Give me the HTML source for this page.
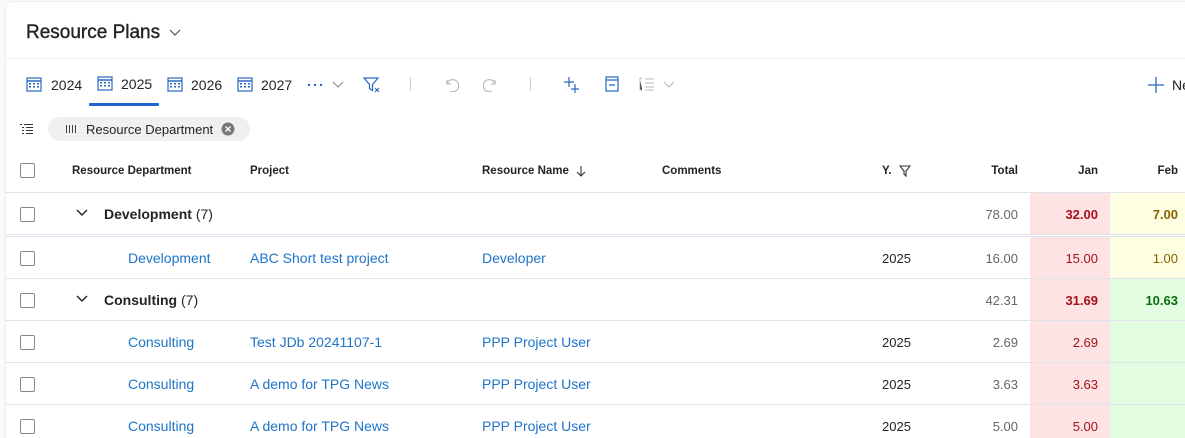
<!DOCTYPE html>
<html><head><style>
*{box-sizing:border-box;margin:0;padding:0}
html,body{width:1185px;height:438px;overflow:hidden}
body{background:#fafafa;font-family:"Liberation Sans",sans-serif;font-size:13px;color:#242424;position:relative}
.card{position:absolute;left:6px;top:2px;width:1190px;height:450px;background:#fff;border-radius:6px;box-shadow:0 0 2px rgba(0,0,0,.15)}
.a{position:absolute;white-space:nowrap}
.cb{position:absolute;left:20px;width:15px;height:15px;border:1.5px solid #8a8a8a;border-radius:2px}
.row{position:absolute;left:6px;width:1180px;height:42px;border-bottom:1px solid #e0e3ea}
.lnk{color:#1f74c8;font-size:14px}
.r{text-align:right}
.hd{font-size:11.5px;font-weight:bold}
.grey{color:#666}
.g{font-size:14px;font-weight:bold}
</style></head><body>
<div class="card"></div>
<div class="a" style="left:26px;top:22px;font-size:19px;color:#242424;-webkit-text-stroke:0.4px #242424">Resource Plans</div>
<svg class="a" style="left:168px;top:28px" width="14" height="10"><path d="M2 2l5 5 5-5" fill="none" stroke="#555" stroke-width="1.2"/></svg>
<div class="a" style="left:6px;top:58px;width:1180px;height:1px;background:#f0f0f0"></div>

<svg class="a" style="left:26px;top:76px" width="16" height="16"><rect x="1" y="2" width="14" height="13" fill="none" stroke="#2a68c0" stroke-width="1.2"/><line x1="1" y1="5" x2="15" y2="5" stroke="#2a68c0" stroke-width="1.5"/><g fill="#2a68c0"><rect x="3" y="7" width="2" height="1.5"/><rect x="7" y="7" width="2" height="1.5"/><rect x="11" y="7" width="2" height="1.5"/><rect x="3" y="10" width="2" height="1.5"/><rect x="7" y="10" width="2" height="1.5"/><rect x="11" y="10" width="2" height="1.5"/></g></svg>
<div class="a" style="left:51px;top:77px;font-size:14px">2024</div>
<svg class="a" style="left:97px;top:75px" width="16" height="16"><rect x="1" y="2" width="14" height="13" fill="none" stroke="#2a68c0" stroke-width="1.2"/><line x1="1" y1="5" x2="15" y2="5" stroke="#2a68c0" stroke-width="1.5"/><g fill="#2a68c0"><rect x="3" y="7" width="2" height="1.5"/><rect x="7" y="7" width="2" height="1.5"/><rect x="11" y="7" width="2" height="1.5"/><rect x="3" y="10" width="2" height="1.5"/><rect x="7" y="10" width="2" height="1.5"/><rect x="11" y="10" width="2" height="1.5"/></g></svg>
<div class="a" style="left:121px;top:76px;font-size:14px">2025</div>
<div class="a" style="left:89px;top:103px;width:70px;height:3px;background:#1f65d6;border-radius:1px"></div>
<svg class="a" style="left:167px;top:76px" width="16" height="16"><rect x="1" y="2" width="14" height="13" fill="none" stroke="#2a68c0" stroke-width="1.2"/><line x1="1" y1="5" x2="15" y2="5" stroke="#2a68c0" stroke-width="1.5"/><g fill="#2a68c0"><rect x="3" y="7" width="2" height="1.5"/><rect x="7" y="7" width="2" height="1.5"/><rect x="11" y="7" width="2" height="1.5"/><rect x="3" y="10" width="2" height="1.5"/><rect x="7" y="10" width="2" height="1.5"/><rect x="11" y="10" width="2" height="1.5"/></g></svg>
<div class="a" style="left:191px;top:77px;font-size:14px">2026</div>
<svg class="a" style="left:237px;top:76px" width="16" height="16"><rect x="1" y="2" width="14" height="13" fill="none" stroke="#2a68c0" stroke-width="1.2"/><line x1="1" y1="5" x2="15" y2="5" stroke="#2a68c0" stroke-width="1.5"/><g fill="#2a68c0"><rect x="3" y="7" width="2" height="1.5"/><rect x="7" y="7" width="2" height="1.5"/><rect x="11" y="7" width="2" height="1.5"/><rect x="3" y="10" width="2" height="1.5"/><rect x="7" y="10" width="2" height="1.5"/><rect x="11" y="10" width="2" height="1.5"/></g></svg>
<div class="a" style="left:261px;top:77px;font-size:14px">2027</div>
<svg class="a" style="left:306px;top:78px" width="40" height="12"><g fill="#2a68c0"><circle cx="3" cy="7" r="1.2"/><circle cx="9" cy="7" r="1.2"/><circle cx="15" cy="7" r="1.2"/></g><path d="M27 4l5 5 5-5" fill="none" stroke="#888" stroke-width="1.1"/></svg>
<svg class="a" style="left:363px;top:76px" width="20" height="18"><path d="M1 2h14l-5.5 6.5v6l-3-2v-4z" fill="none" stroke="#2a68c0" stroke-width="1.2"/><path d="M12 12l4 4M16 12l-4 4" stroke="#2a68c0" stroke-width="1.1"/></svg>
<div class="a" style="left:410px;top:77px;width:1px;height:14px;background:#ccc"></div>
<svg class="a" style="left:443px;top:76px" width="16" height="16"><path d="M4 4v4h4M4 8a6 6 0 1 1 3 7" fill="none" stroke="#bbb" stroke-width="1.2"/></svg>
<svg class="a" style="left:483px;top:76px" width="16" height="16"><path d="M12 4v4H8M12 8a6 6 0 1 0-3 7" fill="none" stroke="#bbb" stroke-width="1.2"/></svg>
<div class="a" style="left:530px;top:77px;width:1px;height:14px;background:#ccc"></div>
<svg class="a" style="left:563px;top:76px" width="18" height="18"><path d="M6 1v10M1 6h10M12 8v9M8 13h8" stroke="#2a68c0" stroke-width="1.2"/></svg>
<svg class="a" style="left:604px;top:76px" width="16" height="16"><rect x="2" y="1" width="12" height="14" fill="none" stroke="#2a68c0" stroke-width="1.2"/><path d="M2 4h12M5 9h6" stroke="#2a68c0" stroke-width="1.2"/></svg>
<svg class="a" style="left:638px;top:76px" width="40" height="16"><path d="M2 2h2M2 2v12h2M7 3h9M7 7h9M7 11h9M7 14h9" stroke="#bbb" stroke-width="1"/><path d="M26 6l5 5 5-5" fill="none" stroke="#bbb" stroke-width="1.1"/></svg>
<svg class="a" style="left:1147px;top:76px" width="18" height="18"><path d="M9 1v16M1 9h16" stroke="#2a68c0" stroke-width="1.3"/></svg>
<div class="a" style="left:1172px;top:77px;font-size:14px">New</div>

<svg class="a" style="left:20px;top:123px" width="14" height="12"><g fill="#333"><rect x="0" y="1" width="2" height="1"/><rect x="4" y="1" width="9" height="1"/><rect x="2" y="4" width="2" height="1"/><rect x="6" y="4" width="7" height="1"/><rect x="2" y="7" width="2" height="1"/><rect x="6" y="7" width="7" height="1"/><rect x="2" y="10" width="2" height="1"/><rect x="6" y="10" width="7" height="1"/></g></svg>
<div class="a" style="left:48px;top:117px;width:202px;height:24px;background:#f0f0f0;border-radius:12px"></div>
<svg class="a" style="left:66px;top:125px" width="12" height="8"><g fill="#444"><rect x="0" y="0" width="1" height="8"/><rect x="3" y="0" width="1" height="8"/><rect x="6" y="0" width="1" height="8"/><rect x="9" y="0" width="1" height="8"/></g></svg>
<div class="a" style="left:86px;top:122px;font-size:13px">Resource Department</div>
<svg class="a" style="left:221px;top:122px" width="14" height="14"><circle cx="7" cy="7" r="6.5" fill="#777"/><path d="M4.5 4.5l5 5M9.5 4.5l-5 5" stroke="#fff" stroke-width="1.4"/></svg>

<div class="row" style="top:150px;height:43px"></div>
<div class="cb" style="top:163px"></div>
<div class="a hd" style="left:72px;top:165px">Resource Department</div>
<div class="a hd" style="left:250px;top:165px">Project</div>
<div class="a hd" style="left:482px;top:165px">Resource Name</div>
<svg class="a" style="left:576px;top:165px" width="10" height="12"><path d="M5 1v10M1 7l4 4 4-4" fill="none" stroke="#333" stroke-width="1.1"/></svg>
<div class="a hd" style="left:662px;top:165px">Comments</div>
<div class="a hd" style="left:882px;top:165px">Y.</div>
<svg class="a" style="left:899px;top:165px" width="12" height="12"><path d="M1 1h10l-4 5v5l-2-2V6z" fill="none" stroke="#333" stroke-width="1.1"/></svg>
<div class="a hd r" style="left:960px;top:165px;width:58px">Total</div>
<div class="a hd r" style="left:1040px;top:165px;width:58px">Jan</div>
<div class="a hd r" style="left:1120px;top:165px;width:58px">Feb</div>

<div class="row" style="top:193px;height:42px;border-bottom:none"></div>
<div class="a" style="left:1030px;top:193px;width:80px;height:42px;background:#fde3e3"></div>
<div class="a" style="left:1110px;top:193px;width:80px;height:42px;background:#fefee3"></div>
<div class="a" style="left:6px;top:234px;width:1180px;height:1px;background:#dfe2ea"></div>
<div class="a" style="left:6px;top:236px;width:1180px;height:1px;background:#dfe2ea"></div>
<div class="cb" style="top:207px"></div>
<svg class="a" style="left:76px;top:209px" width="12" height="8"><path d="M1 1l5 5 5-5" fill="none" stroke="#222" stroke-width="1.4"/></svg>
<div class="a g" style="left:104px;top:206px">Development <span style="font-weight:normal">(7)</span></div>
<div class="a r grey" style="left:940px;top:207px;width:78px">78.00</div>
<div class="a r" style="left:1020px;top:207px;width:78px;color:#a4111b;font-weight:bold">32.00</div>
<div class="a r" style="left:1100px;top:207px;width:78px;color:#8a6000;font-weight:bold">7.00</div>

<div class="row" style="top:237px;height:42px"></div>
<div class="a" style="left:1030px;top:237px;width:80px;height:41px;background:#fde3e3"></div>
<div class="a" style="left:1110px;top:237px;width:80px;height:41px;background:#fefee3"></div>
<div class="cb" style="top:251px"></div>
<div class="a lnk" style="left:128px;top:250px">Development</div>
<div class="a lnk" style="left:250px;top:250px">ABC Short test project</div>
<div class="a lnk" style="left:482px;top:250px">Developer</div>
<div class="a" style="left:882px;top:251px">2025</div>
<div class="a r grey" style="left:940px;top:251px;width:78px">16.00</div>
<div class="a r" style="left:1020px;top:251px;width:78px;color:#a4111b">15.00</div>
<div class="a r" style="left:1100px;top:251px;width:78px;color:#8a6000">1.00</div>

<div class="row" style="top:279px;height:42px"></div>
<div class="a" style="left:1030px;top:279px;width:80px;height:41px;background:#fde3e3"></div>
<div class="a" style="left:1110px;top:279px;width:80px;height:41px;background:#e3fde3"></div>
<div class="cb" style="top:293px"></div>
<svg class="a" style="left:76px;top:295px" width="12" height="8"><path d="M1 1l5 5 5-5" fill="none" stroke="#222" stroke-width="1.4"/></svg>
<div class="a g" style="left:104px;top:292px">Consulting <span style="font-weight:normal">(7)</span></div>
<div class="a r grey" style="left:940px;top:293px;width:78px">42.31</div>
<div class="a r" style="left:1020px;top:293px;width:78px;color:#a4111b;font-weight:bold">31.69</div>
<div class="a r" style="left:1100px;top:293px;width:78px;color:#0e6b0e;font-weight:bold">10.63</div>

<div class="row" style="top:321px;height:42px"></div>
<div class="a" style="left:1030px;top:321px;width:80px;height:41px;background:#fde3e3"></div>
<div class="a" style="left:1110px;top:321px;width:80px;height:41px;background:#e3fde3"></div>
<div class="cb" style="top:335px"></div>
<div class="a lnk" style="left:128px;top:334px">Consulting</div>
<div class="a lnk" style="left:250px;top:334px">Test JDb 20241107-1</div>
<div class="a lnk" style="left:482px;top:334px">PPP Project User</div>
<div class="a" style="left:882px;top:335px">2025</div>
<div class="a r grey" style="left:940px;top:335px;width:78px">2.69</div>
<div class="a r" style="left:1020px;top:335px;width:78px;color:#a4111b">2.69</div>

<div class="row" style="top:363px;height:42px"></div>
<div class="a" style="left:1030px;top:363px;width:80px;height:41px;background:#fde3e3"></div>
<div class="a" style="left:1110px;top:363px;width:80px;height:41px;background:#e3fde3"></div>
<div class="cb" style="top:377px"></div>
<div class="a lnk" style="left:128px;top:376px">Consulting</div>
<div class="a lnk" style="left:250px;top:376px">A demo for TPG News</div>
<div class="a lnk" style="left:482px;top:376px">PPP Project User</div>
<div class="a" style="left:882px;top:377px">2025</div>
<div class="a r grey" style="left:940px;top:377px;width:78px">3.63</div>
<div class="a r" style="left:1020px;top:377px;width:78px;color:#a4111b">3.63</div>

<div class="row" style="top:405px;height:42px"></div>
<div class="a" style="left:1030px;top:405px;width:80px;height:41px;background:#fde3e3"></div>
<div class="a" style="left:1110px;top:405px;width:80px;height:41px;background:#e3fde3"></div>
<div class="cb" style="top:419px"></div>
<div class="a lnk" style="left:128px;top:418px">Consulting</div>
<div class="a lnk" style="left:250px;top:418px">A demo for TPG News</div>
<div class="a lnk" style="left:482px;top:418px">PPP Project User</div>
<div class="a" style="left:882px;top:419px">2025</div>
<div class="a r grey" style="left:940px;top:419px;width:78px">5.00</div>
<div class="a r" style="left:1020px;top:419px;width:78px;color:#a4111b">5.00</div>
</body></html>
